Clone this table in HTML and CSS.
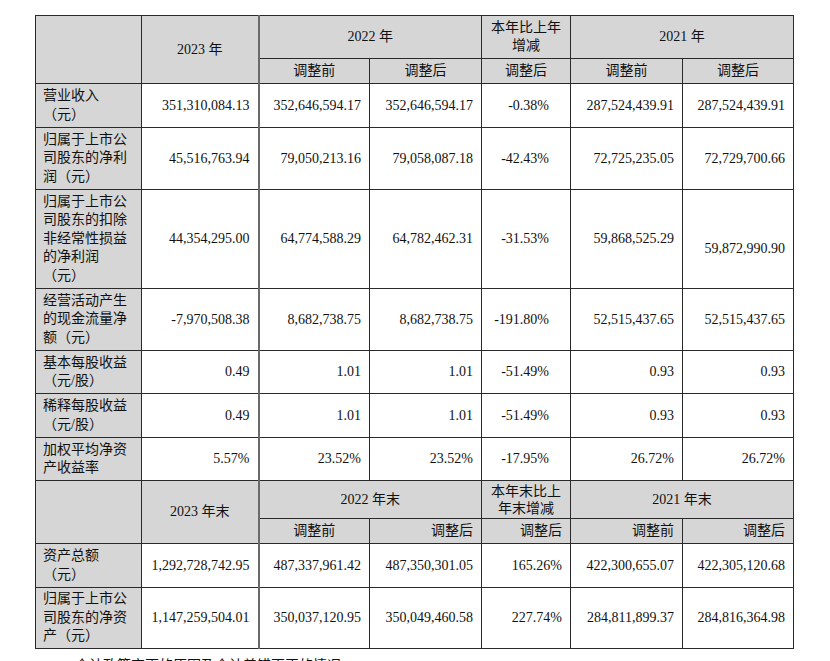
FILE: index.html
```html
<!DOCTYPE html>
<html lang="zh-CN">
<head>
<meta charset="utf-8">
<title>主要会计数据</title>
<link rel="stylesheet" href="styles.css">
</head>
<body>
<div class="page">
<table class="fin">
  <colgroup>
    <col class="c0"><col class="c1"><col class="c2"><col class="c3"><col class="c4"><col class="c5"><col class="c6">
  </colgroup>
  <tr class="h-a">
    <th class="lab" rowspan="2"></th>
    <th class="ctr" rowspan="2">2023 年</th>
    <th class="ctr thick-l" colspan="2">2022 年</th>
    <th class="ctr">本年比上年<br>增减</th>
    <th class="ctr" colspan="2">2021 年</th>
  </tr>
  <tr class="h-b">
    <th class="ctr thick-l">调整前</th>
    <th class="ctr">调整后</th>
    <th class="ctr">调整后</th>
    <th class="ctr">调整前</th>
    <th class="ctr">调整后</th>
  </tr>
  <tr class="r44">
    <th class="lab">营业收入<br>（元）</th>
    <td>351,310,084.13</td><td class="thick-l">352,646,594.17</td><td>352,646,594.17</td><td class="pct">-0.38%</td><td>287,524,439.91</td><td>287,524,439.91</td>
  </tr>
  <tr class="r62">
    <th class="lab">归属于上市公<br>司股东的净利<br>润（元）</th>
    <td>45,516,763.94</td><td class="thick-l">79,050,213.16</td><td>79,058,087.18</td><td class="pct">-42.43%</td><td>72,725,235.05</td><td>72,729,700.66</td>
  </tr>
  <tr class="r99">
    <th class="lab">归属于上市公<br>司股东的扣除<br>非经常性损益<br>的净利润<br>（元）</th>
    <td>44,354,295.00</td><td class="thick-l">64,774,588.29</td><td>64,782,462.31</td><td class="pct">-31.53%</td><td>59,868,525.29</td><td class="low">59,872,990.90</td>
  </tr>
  <tr class="r62">
    <th class="lab">经营活动产生<br>的现金流量净<br>额（元）</th>
    <td>-7,970,508.38</td><td class="thick-l">8,682,738.75</td><td>8,682,738.75</td><td class="pct">-191.80%</td><td>52,515,437.65</td><td>52,515,437.65</td>
  </tr>
  <tr class="r43">
    <th class="lab">基本每股收益<br>（元/股）</th>
    <td>0.49</td><td class="thick-l">1.01</td><td>1.01</td><td class="pct">-51.49%</td><td>0.93</td><td>0.93</td>
  </tr>
  <tr class="r44">
    <th class="lab">稀释每股收益<br>（元/股）</th>
    <td>0.49</td><td class="thick-l">1.01</td><td>1.01</td><td class="pct">-51.49%</td><td>0.93</td><td>0.93</td>
  </tr>
  <tr class="r43">
    <th class="lab">加权平均净资<br>产收益率</th>
    <td>5.57%</td><td class="thick-l">23.52%</td><td>23.52%</td><td class="pct">-17.95%</td><td>26.72%</td><td>26.72%</td>
  </tr>
  <tr class="h-c">
    <th class="lab" rowspan="2"></th>
    <th class="ctr" rowspan="2">2023 年末</th>
    <th class="ctr thick-l" colspan="2">2022 年末</th>
    <th class="ctr tight">本年末比上<br>年末增减</th>
    <th class="ctr" colspan="2">2021 年末</th>
  </tr>
  <tr class="h-b">
    <th class="ctr thick-l">调整前</th>
    <th class="rgt">调整后</th>
    <th class="rgt">调整后</th>
    <th class="rgt">调整前</th>
    <th class="rgt">调整后</th>
  </tr>
  <tr class="r44">
    <th class="lab">资产总额<br>（元）</th>
    <td>1,292,728,742.95</td><td class="thick-l">487,337,961.42</td><td>487,350,301.05</td><td>165.26%</td><td>422,300,655.07</td><td>422,305,120.68</td>
  </tr>
  <tr class="r61">
    <th class="lab">归属于上市公<br>司股东的净资<br>产（元）</th>
    <td>1,147,259,504.01</td><td class="thick-l">350,037,120.95</td><td>350,049,460.58</td><td>227.74%</td><td>284,811,899.37</td><td>284,816,364.98</td>
  </tr>
</table>
<p class="note">会计政策变更的原因及会计差错更正的情况</p>
</div>
</body>
</html>
```

FILE: styles.css
```css
html, body {
  margin: 0;
  padding: 0;
  background: #ffffff;
}
.page {
  padding: 15px 0 0 35px;
  font-family: "Liberation Serif", "Noto Sans CJK SC", serif;
  font-size: 14px;
  color: #111;
}
.fin {
  border-collapse: collapse;
  table-layout: fixed;
  width: 758px;
}
.c0 { width: 106px; }
.c1 { width: 117px; }
.c2 { width: 111px; }
.c3 { width: 112px; }
.c4 { width: 89px; }
.c5 { width: 112px; }
.c6 { width: 111px; }

.fin th, .fin td {
  border: 1px solid #2a2a2a;
  line-height: 18px;
  padding: 0 8px;
  font-weight: normal;
  vertical-align: middle;
  overflow: hidden;
  white-space: nowrap;
}
.fin th {
  background: #d6d6d6;
}
.fin td {
  background: #ffffff;
  text-align: right;
}
.fin th.lab {
  text-align: left;
  padding-left: 7px;
  padding-right: 0;
  line-height: 18.5px;
}
.fin th.ctr { text-align: center; padding: 0 2px; }
.fin th.rgt { text-align: right; padding-right: 8px; }
.fin th.tight { line-height: 17px; }
.fin td.pct { padding-right: 21px; }
.fin td.low { padding-top: 20px; }
.fin .thick-l { border-left: 2px solid #6a6a6a; }

.h-a { height: 43px; }
.h-b { height: 25px; }
.h-c { height: 38px; }
.r43 { height: 43px; }
.r44 { height: 44px; }
.r61 { height: 61px; }
.r62 { height: 62px; }
.r99 { height: 99px; }

.note {
  margin: 8px 0 0 40px;
  line-height: 18px;
  font-size: 14px;
}
```
